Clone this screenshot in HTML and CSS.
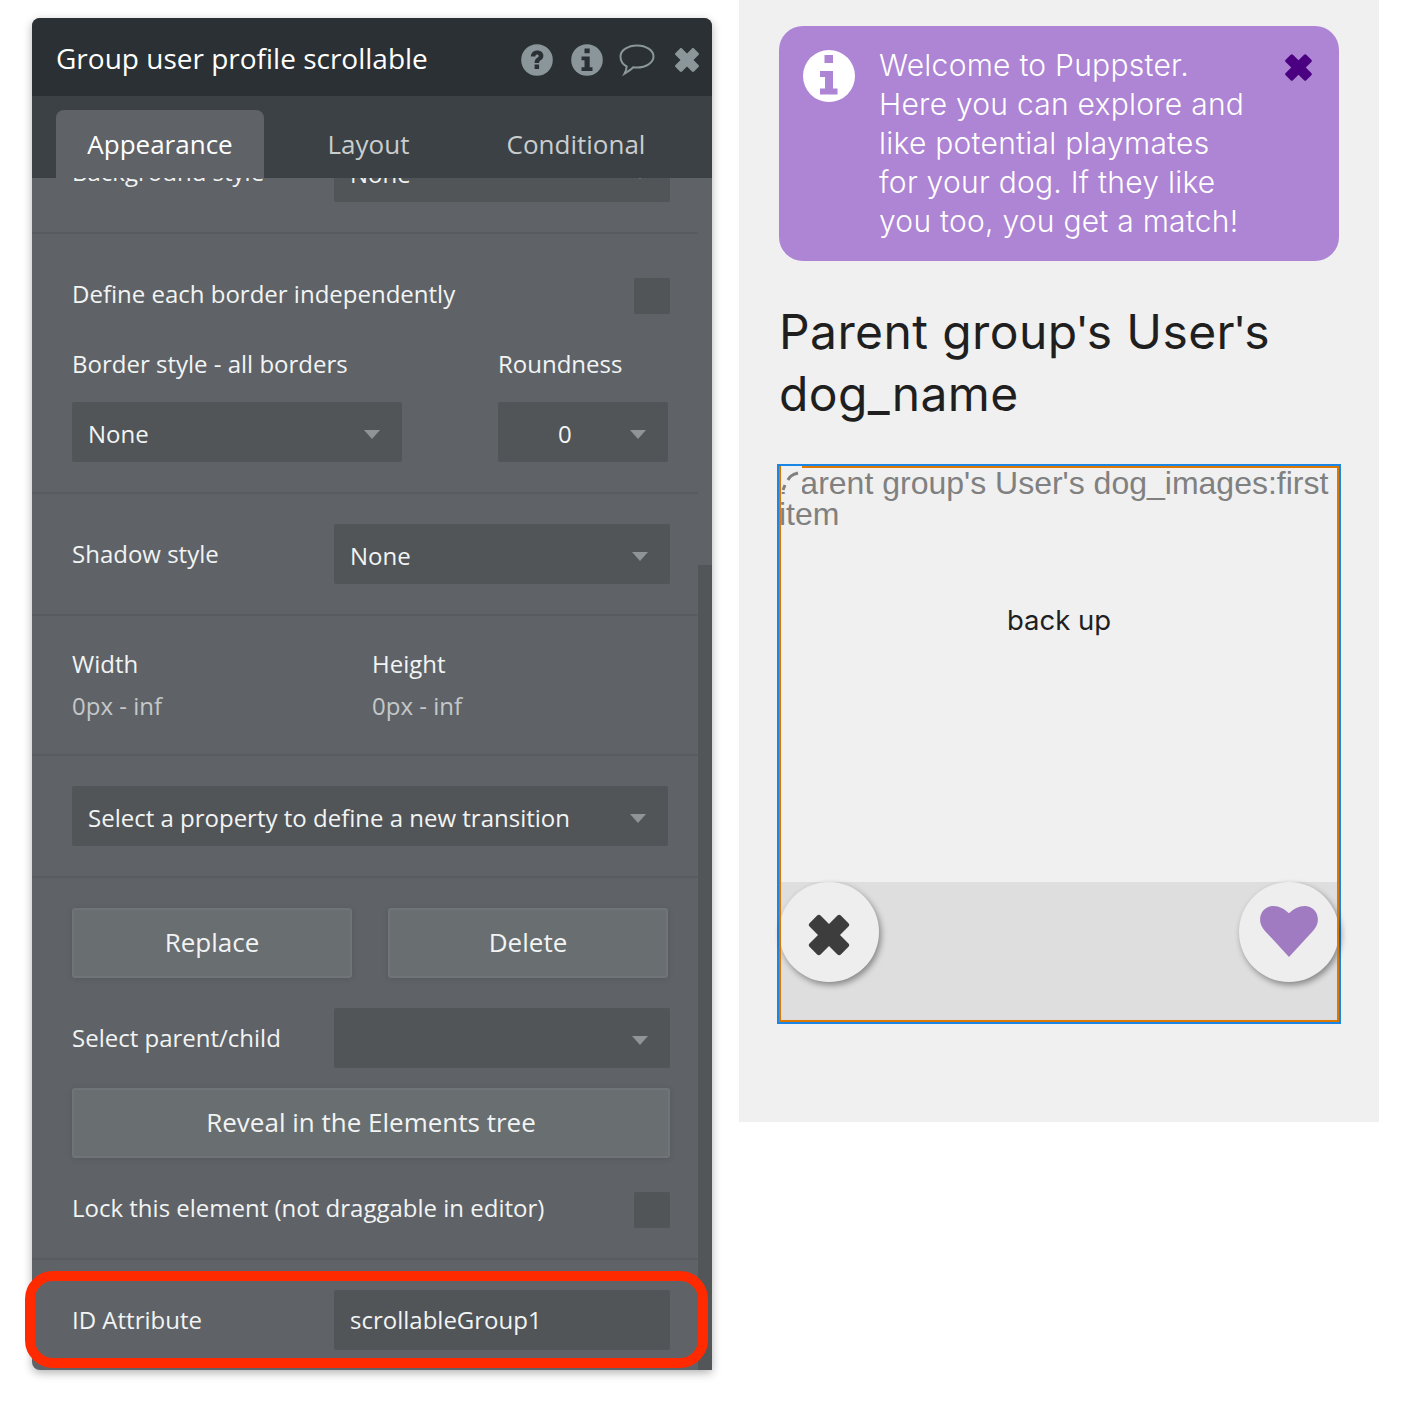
FILE: index.html
```html
<!DOCTYPE html>
<html lang="en">

<head>
    <meta charset="UTF-8">
    <title>Group user profile scrollable</title>
    <link rel="stylesheet" href="styles.css">
</head>

<body>

    <div class="page">
        <div class="panel">
            <div class="panel-header">
                <span class="panel-title">Group user profile scrollable</span>
                <div class="panel-icons">
                    <svg class="icon-help" viewBox="0 0 32 32" width="32" height="32">
                        <circle cx="16" cy="16" r="15.800" fill="#8a9699"/>
                        <path d="M9.800 12.500c.3-3.900 2.900-6 6.500-6 3.600 0 6.100 2.200 6.100 5.300 0 2.300-1.200 3.500-2.700 4.500-1.200.8-1.600 1.300-1.600 2.700h-4.500c0-2.700.8-3.900 2.400-5 1-.7 1.700-1.300 1.700-2.100 0-1-.7-1.500-1.600-1.500-1.100 0-1.700.8-1.800 2z" fill="#2a3033"/>
                        <rect x="13.600" y="20.500" width="4.500" height="4.500" fill="#2a3033"/>
                    </svg>
                    <svg class="icon-info" viewBox="0 0 32 32" width="32" height="32">
                        <circle cx="16" cy="16" r="15.800" fill="#8a9699"/>
                        <path d="M13.500 4.500h5.200v4.800h-5.200zM10.500 12.500h8.200v10.700h2.800v3.800H10.500v-3.800h3v-6.900h-3z" fill="#2a3033"/>
                    </svg>
                    <svg class="icon-chat" viewBox="0 0 36 32" width="36" height="32">
                        <path d="M18 1.500c9 0 16.500 4.800 16.500 11S27 23.500 18 23.500c-1.300 0-2.500-.1-3.700-.3-1.900 2-4.600 4-8.800 6.500 1.300-2.500 2-4.500 2.200-7.200C3.900 20.500 1.500 16.800 1.500 12.500c0-6.200 7.500-11 16.500-11z" fill="none" stroke="#8a9699" stroke-width="2"/>
                    </svg>
                    <svg class="icon-close" viewBox="0 0 26 26" width="26" height="26">
                        <path d="M8 1.500l5 5 5-5c.6-.6 1.400-.6 2 0l4.500 4.500c.6.6.6 1.400 0 2l-5 5 5 5c.6.6.6 1.400 0 2L20 24.500c-.6.6-1.400.6-2 0l-5-5-5 5c-.6.6-1.400.6-2 0L1.500 20c-.6-.6-.6-1.400 0-2l5-5-5-5c-.6-.6-.6-1.400 0-2L6 1.500c.6-.6 1.400-.6 2 0z" fill="#8a9699"/>
                    </svg>
                </div>
            </div>

            <div class="panel-tabs">
                <div class="tab tab-active">Appearance</div>
                <div class="tab tab-layout">Layout</div>
                <div class="tab tab-conditional">Conditional</div>
            </div>

            <div class="panel-scroll">
                <div class="scroll-content">
                    <div class="section section-first">
                        <div class="row row-top">
                            <span class="label label-wide">Background style</span>
                            <div class="select select-wide"><span>None</span><i class="caret"></i></div>
                        </div>
                    </div>

                    <div class="section section-border">
                        <div class="row check-row">
                            <span class="label">Define each border independently</span>
                            <div class="checkbox"></div>
                        </div>
                        <div class="border-grid">
                            <span class="label">Border style - all borders</span>
                            <span class="label">Roundness</span>
                            <div class="select"><span>None</span><i class="caret"></i></div>
                            <div class="select select-num"><span>0</span><i class="caret"></i></div>
                        </div>
                    </div>

                    <div class="section section-shadow">
                        <div class="row">
                            <span class="label label-wide">Shadow style</span>
                            <div class="select select-wide"><span>None</span><i class="caret"></i></div>
                        </div>
                    </div>

                    <div class="section section-size">
                        <div class="size-col">
                            <span class="label">Width</span>
                            <span class="value">0px - inf</span>
                        </div>
                        <div class="size-col">
                            <span class="label">Height</span>
                            <span class="value">0px - inf</span>
                        </div>
                    </div>

                    <div class="section section-transition">
                        <div class="select select-full"><span>Select a property to define a new transition</span><i class="caret"></i></div>
                    </div>

                    <div class="section section-actions">
                        <div class="button-row">
                            <div class="button">Replace</div>
                            <div class="button">Delete</div>
                        </div>
                        <div class="row parent-row">
                            <span class="label label-wide">Select parent/child</span>
                            <div class="select select-wide"><span></span><i class="caret"></i></div>
                        </div>
                        <div class="button button-full">Reveal in the Elements tree</div>
                        <div class="row check-row lock-row">
                            <span class="label">Lock this element (not draggable in editor)</span>
                            <div class="checkbox"></div>
                        </div>
                    </div>

                    <div class="section section-id">
                        <div class="row">
                            <span class="label label-wide">ID Attribute</span>
                            <div class="select select-wide select-id"><span>scrollableGroup1</span></div>
                        </div>
                    </div>
                </div>
                <div class="scrollbar"><div class="scrollbar-thumb"></div></div>
            </div>

            <div class="highlight"></div>
        </div>

        <div class="preview">
            <div class="notice">
                <svg class="notice-info" viewBox="0 0 52 52" width="52" height="52">
                    <circle cx="26" cy="26" r="26" fill="#fff"/>
                    <path d="M21.500 5h8.500v8h-8.500zM17 21h13v17.500h4.500v6H17v-6h5V27h-5z" fill="#ae84d4"/>
                </svg>
                <p class="notice-text">Welcome to Puppster.<br>Here you can explore and<br>like potential playmates<br>for your dog. If they like<br>you too, you get a match!</p>
                <svg class="notice-close" viewBox="0 0 26 26" width="29" height="29">
                    <path d="M8 1.500l5 5 5-5c.6-.6 1.400-.6 2 0l4.500 4.500c.6.6.6 1.400 0 2l-5 5 5 5c.6.6.6 1.400 0 2L20 24.500c-.6.6-1.400.6-2 0l-5-5-5 5c-.6.6-1.400.6-2 0L1.500 20c-.6-.6-.6-1.400 0-2l5-5-5-5c-.6-.6-.6-1.400 0-2L6 1.500c.6-.6 1.400-.6 2 0z" fill="#4b0082"/>
                </svg>
            </div>

            <h1 class="dog-name">Parent group<span class="apos">'</span>s User<span class="apos">'</span>s<br>dog_name</h1>

            <div class="photo-frame">
                <div class="photo">
                    <p class="photo-alt">Parent group's User's dog_images:first item</p>
                    <svg class="broken-mark" viewBox="0 0 21 26" width="21" height="26">
                        <rect width="21" height="26" fill="#f0f0f0"/>
                        <path d="M7 14c1.500-3 3-5 10-7" fill="none" stroke="#808080" stroke-width="3"/>
                        <path d="M2 24l2-5" fill="none" stroke="#808080" stroke-width="3"/>
                    </svg>
                    <p class="photo-label">back up</p>
                </div>
                <div class="photo-actions">
                    <div class="round-button">
                        <svg class="round-x" viewBox="0 0 26 26" width="44" height="44">
                            <path d="M8 1.500l5 5 5-5c.6-.6 1.400-.6 2 0l4.500 4.500c.6.6.6 1.400 0 2l-5 5 5 5c.6.6.6 1.400 0 2L20 24.500c-.6.6-1.400.6-2 0l-5-5-5 5c-.6.6-1.400.6-2 0L1.500 20c-.6-.6-.6-1.400 0-2l5-5-5-5c-.6-.6-.6-1.400 0-2L6 1.500c.6-.6 1.400-.6 2 0z" fill="#3d3d3d"/>
                        </svg>
                    </div>
                    <div class="round-button">
                        <svg viewBox="0 0 60 54" width="60" height="52">
                            <path d="M30 53L8 29C3 24 0 20 0 14 0 6 6 0 14 0c6 0 11 3 16 7.500C35 3 40 0 46 0c8 0 14 6 14 14 0 6-3 10-8 15z" fill="#a17bc2"/>
                        </svg>
                    </div>
                </div>
            </div>
        </div>
    </div>

</body>

</html>
```

FILE: styles.css
```css
* {
    box-sizing: border-box;
}

body {
    margin: 0;
    background-color: white;
    font-family: "Open Sans", sans-serif;
}

.page {
    display: flex;
    align-items: flex-start;
    height: 1402px;
    padding-left: 32px;
    overflow: hidden;
}

/* property editor */
.panel {
    position: relative;
    width: 680px;
    height: 1352px;
    margin-top: 18px;
    border-radius: 8px 8px 0 8px;
    background-color: #5f6367;
    box-shadow: 0 3px 10px rgba(0, 0, 0, 0.3);
    color: #f2f4f4;
}

.panel-header {
    display: flex;
    justify-content: space-between;
    align-items: center;
    height: 78px;
    padding: 2px 12px 0 24px;
    border-radius: 8px 8px 0 0;
    background-color: #2a3033;
}

.panel-title {
    font-size: 28px;
    color: white;
}

.panel-icons {
    display: flex;
    align-items: center;
    padding-top: 4px;
}

.panel-icons svg {
    display: block;
}

.icon-info {
    margin-left: 18px;
}

.icon-chat {
    margin-left: 16px;
}

.icon-close {
    margin-left: 19px;
}

.panel-tabs {
    display: flex;
    height: 82px;
    padding: 14px 0 0 24px;
    background-color: #3c4145;
    font-size: 26px;
    color: #c9cdce;
}

.tab {
    padding-top: 16px;
    text-align: center;
}

.tab-active {
    width: 208px;
    border-radius: 8px 8px 0 0;
    background-color: #5f6367;
    color: white;
}

.tab-layout {
    width: 209px;
}

.tab-conditional {
    width: 206px;
}

.panel-scroll {
    display: flex;
    height: 1192px;
    overflow: hidden;
    border-radius: 0 0 0 8px;
}

.scroll-content {
    width: 666px;
    flex: none;
}

.scrollbar {
    flex: 1;
    padding-top: 387px;
}

.scrollbar-thumb {
    height: 805px;
    background-color: #525659;
}

.section {
    border-bottom: 2px solid #585c60;
    padding-left: 40px;
}

.section-first {
    display: flow-root;
    height: 56px;
}

.row {
    display: flex;
    align-items: center;
    width: 598px;
}

.row-top {
    margin-top: -36px;
}

.label {
    font-size: 24px;
    line-height: 32px;
}

.label-wide {
    width: 262px;
    flex: none;
}

.select {
    display: flex;
    justify-content: space-between;
    align-items: center;
    height: 60px;
    padding: 3px 22px 0 16px;
    border-radius: 2px;
    background-color: #515558;
    font-size: 24px;
    color: #f2f4f4;
}

.select-wide {
    width: 336px;
    flex: none;
}

.select-num {
    padding-left: 60px;
}

.select-full {
    width: 596px;
}

.select-id {
    padding-bottom: 2px;
    padding-top: 0;
}

.caret {
    width: 0;
    height: 0;
    margin-top: 2px;
    border-left: 8.5px solid transparent;
    border-right: 8.5px solid transparent;
    border-top: 9px solid #8f9497;
}

.checkbox {
    width: 36px;
    height: 36px;
    border-radius: 2px;
    background-color: #515558;
}

.check-row {
    justify-content: space-between;
    height: 36px;
}

.check-row .label {
    margin-bottom: 5px;
}

.section-border {
    height: 260px;
    padding-top: 44px;
}

.border-grid {
    display: grid;
    grid-template-columns: 330px 170px;
    column-gap: 96px;
    row-gap: 22px;
    margin-top: 34px;
}

.section-shadow {
    height: 122px;
    padding-top: 30px;
}

.section-size {
    display: flex;
    height: 140px;
    padding-top: 32px;
}

.size-col {
    display: flex;
    flex-direction: column;
    gap: 10px;
    width: 300px;
}

.value {
    font-size: 24px;
    line-height: 32px;
    color: #c4c8c9;
}

.section-transition {
    height: 122px;
    padding-top: 30px;
}

.section-actions {
    height: 382px;
    padding-top: 30px;
}

.button-row {
    display: flex;
    gap: 36px;
}

.button {
    display: flex;
    justify-content: center;
    align-items: center;
    width: 280px;
    height: 70px;
    padding-bottom: 2px;
    border: 2px solid #6f7478;
    border-radius: 3px;
    background-color: #696e71;
    box-shadow: 0 1px 6px rgba(0, 0, 0, 0.1);
    font-size: 26px;
    color: #f2f4f4;
}

.button-full {
    width: 598px;
    margin-top: 20px;
}

.parent-row {
    margin-top: 30px;
}

.lock-row {
    margin-top: 34px;
}

.section-id {
    padding-top: 30px;
    border-bottom: none;
}

.highlight {
    position: absolute;
    left: -7px;
    top: 1253px;
    width: 683px;
    height: 97px;
    border: 10px solid #ff2a00;
    border-radius: 28px;
}

/* app preview */
.preview {
    width: 640px;
    height: 1122px;
    margin-left: 27px;
    padding: 26px 40px 0;
    background-color: #f0f0f0;
    font-family: Inter, sans-serif;
}

.notice {
    position: relative;
    display: flex;
    height: 235px;
    padding: 20px 0 0 24px;
    border-radius: 24px;
    background-color: #ae84d4;
}

.notice-info {
    flex: none;
    margin-top: 4px;
}

.notice-text {
    margin: 0 0 0 24px;
    font-size: 30px;
    line-height: 39px;
    font-weight: 300;
    letter-spacing: 0.25px;
    color: white;
}

.notice-close {
    position: absolute;
    top: 27px;
    right: 26px;
}

.dog-name {
    margin: 40px 0 39px;
    font-size: 48px;
    line-height: 62px;
    font-weight: 400;
    letter-spacing: 0.4px;
    color: #1f1f1f;
}

.apos {
    font-family: "Liberation Sans", sans-serif;
    line-height: 0;
    letter-spacing: 0;
}

.photo-frame {
    width: 564px;
    height: 560px;
    margin-left: -2px;
    border: 2px solid #1a87e6;
    background-color: #f0f0f0;
    display: flex;
    flex-direction: column;
    outline: 2px solid #de7700;
    outline-offset: -4px;
}

.photo {
    position: relative;
    height: 416px;
    padding-top: 2px;
}

.photo-alt {
    margin: 0;
    font-family: "Liberation Sans", sans-serif;
    font-size: 32px;
    line-height: 31px;
    color: #808080;
}

.broken-mark {
    position: absolute;
    left: 2px;
    top: 0;
}

.photo-label {
    margin: 73px 0 0;
    text-align: center;
    font-size: 27.500px;
    line-height: 34px;
    color: #1f1f1f;
}

.photo-actions {
    display: flex;
    justify-content: space-between;
    flex: 1;
    background-color: #dedede;
}

.round-button {
    display: flex;
    justify-content: center;
    align-items: center;
    width: 100px;
    height: 100px;
    border-radius: 50%;
    background-color: #eeeeee;
    box-shadow: 2px 3px 6px rgba(0, 0, 0, 0.4);
}

.round-x {
    margin-top: 6px;
}
```
